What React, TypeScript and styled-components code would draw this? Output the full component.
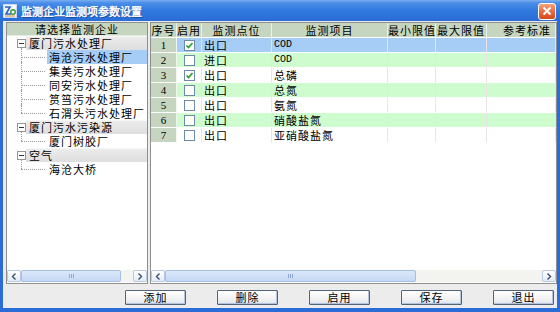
import React from 'react';
import styled, { createGlobalStyle } from 'styled-components';

const Global = createGlobalStyle`
  html, body { margin: 0; padding: 0; background: #ffffff; }
  body { font-family: "Noto Sans CJK SC", "Noto Sans", sans-serif; font-size: 11px; letter-spacing: 1px; color: #000; }
  * { box-sizing: border-box; }
`;

const Window = styled.div`
  width: 560px;
  height: 312px;
  display: flex;
  flex-direction: column;
  background: #2b6cd6;
  overflow: hidden;
`;

const TitleBar = styled.div`
  height: 21px;
  flex: none;
  display: flex;
  align-items: center;
  gap: 4px;
  padding: 0 4px 0 3px;
  background: linear-gradient(#7aaef0 0%, #4a8ee8 14%, #3079de 50%, #2a6cd6 100%);
`;

const TitleText = styled.div`
  flex: 1;
  color: #ffffff;
  font-family: "Noto Sans CJK SC", sans-serif;
  font-weight: 400;
  font-size: 11px;
  letter-spacing: 0;
  line-height: 14px;
  -webkit-text-stroke: 0.45px #ffffff;
  text-shadow: 1px 1px 0 #1b4594;
`;

const CloseBtn = styled.div`
  width: 18px;
  height: 17px;
  margin-top: 1px;
  border: 1px solid #ffffff;
  border-radius: 3px;
  background: linear-gradient(#f6a27e, #e5683a 55%, #cf4a1f);
  display: flex;
  align-items: center;
  justify-content: center;
`;

const Body = styled.div`
  flex: 1;
  margin: 0 3px 4px 3px;
  background: #ececec;
  display: flex;
  flex-direction: column;
  padding: 1px 0 0 3px;
`;

const PanelsRow = styled.div`
  height: 262px;
  display: flex;
  gap: 2px;
`;

const Panel = styled.div<{ $w: number }>`
  width: ${p => p.$w}px;
  height: 100%;
  border: 1px solid #8e8f8f;
  background: #ffffff;
  display: flex;
  flex-direction: column;
`;

const TreeHeader = styled.div`
  height: 13px;
  line-height: 13px;
  background: #c6d5bf;
  text-align: center;
  border-bottom: 1px solid #e4ebe0;
`;

const Tree = styled.div`
  flex: 1;
  display: flex;
  flex-direction: column;
`;

const GroupRow = styled.div`
  height: 14px;
  display: flex;
  align-items: center;
  padding-left: 10px;
`;

const ExpandBox = styled.div`
  width: 9px;
  height: 9px;
  border: 1px solid #979797;
  background: #ffffff;
  display: flex;
  align-items: center;
  justify-content: center;
  flex: none;
  &::after {
    content: '';
    width: 5px;
    height: 1px;
    background: #333;
  }
`;

const GroupLabel = styled.div`
  flex: 1;
  height: 14px;
  line-height: 13px;
  padding-left: 3px;
  background: linear-gradient(#ececec, #dedede);
  border-top: 1px solid #f6f6f6;
`;

const ChildRow = styled.div<{ $last: boolean }>`
  position: relative;
  height: 14px;
  display: flex;
  padding-left: 40px;
  &::before {
    content: '';
    position: absolute;
    left: 14px;
    top: 7px;
    width: 24px;
    border-top: 1px dotted #9a9a9a;
  }
  &::after {
    content: '';
    position: absolute;
    left: 14px;
    top: -2px;
    height: ${p => (p.$last ? 9 : 16)}px;
    border-left: 1px dotted #9a9a9a;
  }
`;

const ChildLabel = styled.div<{ $sel: boolean }>`
  flex: 1;
  line-height: 14px;
  padding-left: 2px;
  background: ${p => (p.$sel ? '#a6cdf6' : 'transparent')};
`;

const HScroll = styled.div`
  height: 12px;
  flex: none;
  display: flex;
  align-items: stretch;
  background: #f3f3ef;
  margin-bottom: 1px;
`;

const ArrowBtn = styled.div`
  width: 14px;
  flex: none;
  border: 1px solid #b9c9e4;
  border-radius: 2px;
  background: linear-gradient(#ffffff, #e2ebf8);
  display: flex;
  align-items: center;
  justify-content: center;
`;

const Track = styled.div`
  flex: 1;
  display: flex;
`;

const Thumb = styled.div<{ $w: number }>`
  width: ${p => p.$w}px;
  border: 1px solid #a5bfe4;
  border-radius: 2px;
  background: linear-gradient(#dce8fa, #c4d8f4);
  display: flex;
  align-items: center;
  justify-content: center;
  gap: 1px;
`;

const Grip = styled.span`
  width: 1px;
  height: 4px;
  background: #8ea9d4;
`;

const GridBody = styled.div`
  flex: 1;
  display: flex;
  flex-direction: column;
`;

const cols = '26px 25px 70px 116px 48px 51px 69px';

const HeaderRow = styled.div`
  height: 15px;
  display: grid;
  grid-template-columns: ${cols};
  background: #c6d5bf;
  border-bottom: 1px solid #ffffff;
`;

const HeadCell = styled.div<{ $pl?: number }>`
  line-height: 14px;
  text-align: center;
  padding-left: ${p => p.$pl ?? 0}px;
  border-right: 1px solid #eef2ec;
  white-space: nowrap;
`;

const DataRow = styled.div<{ $bg: string }>`
  height: 15px;
  display: grid;
  grid-template-columns: ${cols};
  background: ${p => p.$bg};
`;

const NumCell = styled.div`
  background: #c6d5bf;
  border-right: 1px solid #f2f5f0;
  border-bottom: 1px solid #ffffff;
  text-align: center;
  font-family: "Liberation Serif", serif;
  font-size: 11px;
  letter-spacing: 0;
  line-height: 14px;
`;

const Cell = styled.div<{ $latin?: boolean }>`
  border-right: 1px solid #ebe2ea;
  border-bottom: 1px solid #ffffff;
  padding-left: 2px;
  line-height: 14px;
  white-space: nowrap;
  font-family: ${p => (p.$latin ? '"Liberation Mono", monospace' : 'inherit')};
  font-size: ${p => (p.$latin ? '10px' : '11px')};
  letter-spacing: ${p => (p.$latin ? '0' : '1px')};
`;

const CheckCell = styled(Cell)`
  display: flex;
  align-items: center;
  justify-content: center;
  padding-left: 0;
`;

const CheckBox = styled.div`
  width: 11px;
  height: 11px;
  border: 1px solid #6f8aa8;
  background: #ffffff;
  display: flex;
  align-items: center;
  justify-content: center;
`;

const ButtonRow = styled.div`
  flex: 1;
  display: flex;
  justify-content: flex-end;
  align-items: flex-start;
  gap: 31px;
  padding: 6px 3px 0 0;
`;

const Button = styled.div`
  width: 61px;
  height: 15px;
  border: 1px solid #52637c;
  border-radius: 1px;
  background: linear-gradient(#ffffff, #f3f3f3 55%, #dfe6ef);
  box-shadow: inset -1px -1px 0 #b4c4dc;
  text-align: center;
  line-height: 13px;
`;

const Chevron = ({ dir }: { dir: 'l' | 'r' }) => (
  <svg width="6" height="7" viewBox="0 0 6 7">
    <path
      d={dir === 'l' ? 'M4.5 0.5 L1.5 3.5 L4.5 6.5' : 'M1.5 0.5 L4.5 3.5 L1.5 6.5'}
      fill="none"
      stroke="#3b4f6e"
      strokeWidth="1.4"
    />
  </svg>
);

const Scroll = ({ thumb }: { thumb: number }) => (
  <HScroll>
    <ArrowBtn>
      <Chevron dir="l" />
    </ArrowBtn>
    <Track>
      <Thumb $w={thumb}>
        <Grip />
        <Grip />
        <Grip />
      </Thumb>
    </Track>
    <ArrowBtn>
      <Chevron dir="r" />
    </ArrowBtn>
  </HScroll>
);

const groups = [
  {
    name: '厦门污水处理厂',
    children: ['海沧污水处理厂', '集美污水处理厂', '同安污水处理厂', '筼筜污水处理厂', '石渭头污水处理厂'],
  },
  { name: '厦门污水污染源', children: ['厦门树胶厂'] },
  { name: '空气', children: ['海沧大桥'] },
];

const rows = [
  { n: 1, on: true, pt: '出口', item: 'COD' },
  { n: 2, on: false, pt: '进口', item: 'COD' },
  { n: 3, on: true, pt: '出口', item: '总磷' },
  { n: 4, on: false, pt: '出口', item: '总氮' },
  { n: 5, on: false, pt: '出口', item: '氨氮' },
  { n: 6, on: false, pt: '出口', item: '硝酸盐氮' },
  { n: 7, on: false, pt: '出口', item: '亚硝酸盐氮' },
];

const AppIcon = () => (
  <svg width="14" height="14" viewBox="0 0 14 14">
    <rect x="0.5" y="0.5" width="13" height="13" fill="#f4f8ff" stroke="#c9d8ee" />
    <path d="M2 3 H7 L3 10 H8" fill="none" stroke="#2a62c4" strokeWidth="1.6" />
    <circle cx="10" cy="8" r="2.3" fill="none" stroke="#3a9a3a" strokeWidth="1.4" />
    <path d="M2 12 H12" stroke="#d08a2a" strokeWidth="1" />
  </svg>
);

export default function App() {
  return (
    <>
      <Global />
      <Window>
        <TitleBar>
          <AppIcon />
          <TitleText>监测企业监测项参数设置</TitleText>
          <CloseBtn>
            <svg width="10" height="10" viewBox="0 0 10 10">
              <path d="M1.5 1.5 L8.5 8.5 M8.5 1.5 L1.5 8.5" stroke="#ffffff" strokeWidth="2" />
            </svg>
          </CloseBtn>
        </TitleBar>
        <Body>
          <PanelsRow>
            <Panel $w={142}>
              <TreeHeader>请选择监测企业</TreeHeader>
              <Tree>
                {groups.map((g, gi) => (
                  <React.Fragment key={g.name}>
                    <GroupRow>
                      <ExpandBox />
                      <GroupLabel>{g.name}</GroupLabel>
                    </GroupRow>
                    {g.children.map((c, ci) => (
                      <ChildRow key={c} $last={ci === g.children.length - 1}>
                        <ChildLabel $sel={gi === 0 && ci === 0}>{c}</ChildLabel>
                      </ChildRow>
                    ))}
                  </React.Fragment>
                ))}
              </Tree>
              <Scroll thumb={100} />
            </Panel>
            <Panel $w={407}>
              <GridBody>
                <HeaderRow>
                  <HeadCell>序号</HeadCell>
                  <HeadCell>启用</HeadCell>
                  <HeadCell>监测点位</HeadCell>
                  <HeadCell>监测项目</HeadCell>
                  <HeadCell>最小限值</HeadCell>
                  <HeadCell>最大限值</HeadCell>
                  <HeadCell $pl={12}>参考标准</HeadCell>
                </HeaderRow>
                {rows.map((r, i) => {
                  const bg = i === 0 ? '#a6cdf6' : i % 2 === 1 ? '#cffccf' : '#ffffff';
                  return (
                    <DataRow key={r.n} $bg={bg}>
                      <NumCell>{r.n}</NumCell>
                      <CheckCell>
                        <CheckBox>
                          {r.on && (
                            <svg width="9" height="9" viewBox="0 0 9 9">
                              <path d="M1.5 4.5 L3.5 6.5 L7.5 2" fill="none" stroke="#22a022" strokeWidth="1.6" />
                            </svg>
                          )}
                        </CheckBox>
                      </CheckCell>
                      <Cell>{r.pt}</Cell>
                      <Cell $latin={r.item === 'COD'}>{r.item}</Cell>
                      <Cell />
                      <Cell />
                      <Cell />
                    </DataRow>
                  );
                })}
              </GridBody>
              <Scroll thumb={251} />
            </Panel>
          </PanelsRow>
          <ButtonRow>
            <Button>添加</Button>
            <Button>删除</Button>
            <Button>启用</Button>
            <Button>保存</Button>
            <Button>退出</Button>
          </ButtonRow>
        </Body>
      </Window>
    </>
  );
}
